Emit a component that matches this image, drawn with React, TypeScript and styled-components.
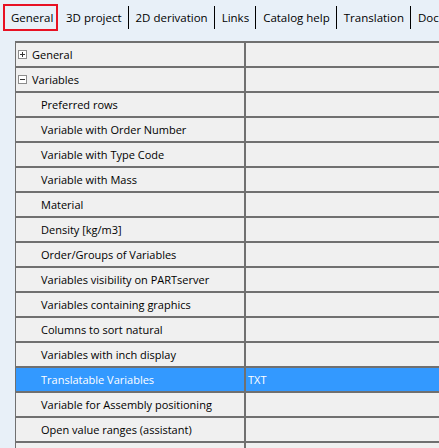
import React from 'react';
import styled, { createGlobalStyle } from 'styled-components';

const GlobalStyle = createGlobalStyle`
  body {
    margin: 0;
    background: #e8f0f8;
    font-family: "Open Sans", "Noto Sans", sans-serif;
    overflow: hidden;
  }
`;

const Page = styled.div`
  width: 439px;
  height: 448px;
  overflow: hidden;
  background: #e8f0f8;
`;

const TabBar = styled.div`
  display: flex;
  align-items: center;
  height: 34px;
  padding-left: 3px;
  white-space: nowrap;
`;

const Tab = styled.div<{ $active?: boolean }>`
  flex-shrink: 0;
  font-size: 11.5px;
  color: #000;
  height: 27px;
  box-sizing: border-box;
  display: flex;
  align-items: center;
  padding: ${p => (p.$active ? '0 0 0 6px' : '0 6px 0 7px')};
  border: ${p => (p.$active ? '2px solid #e81123' : 'none')};
  width: ${p => (p.$active ? '55px' : 'auto')};
  margin-right: ${p => (p.$active ? '1px' : '0')};
`;

const Sep = styled.div`
  flex-shrink: 0;
  width: 1px;
  height: 23px;
  background: #000;
`;

const Grid = styled.div`
  margin: 7px 0 0 15px;
  border-top: 2px solid #707070;
  border-left: 1px solid #707070;
  background: #f0f0f0;
`;

const Row = styled.div<{ $selected?: boolean }>`
  display: grid;
  grid-template-columns: 230px 1fr;
  height: 25px;
  box-sizing: border-box;
  border-bottom: 2px solid #707070;
  background: ${p => (p.$selected ? '#3399ff' : '#f0f0f0')};
  color: ${p => (p.$selected ? '#fff' : '#000')};
  font-size: 11px;
`;

const NameCell = styled.div<{ $level: number }>`
  display: flex;
  align-items: center;
  padding-left: ${p => (p.$level === 0 ? '2px' : '25px')};
  border-right: 2px solid #707070;
  gap: 4px;
`;

const ValueCell = styled.div`
  display: flex;
  align-items: center;
  padding-left: 2px;
`;

const Expander = styled.span`
  width: 9px;
  height: 9px;
  box-sizing: border-box;
  border: 1px solid #8c8c8c;
  position: relative;
  background: #fff;
  margin-right: 1px;
  &::before {
    content: '';
    position: absolute;
    left: 1px;
    right: 1px;
    top: 3px;
    height: 1px;
    background: #333;
  }
`;

const Plus = styled(Expander)`
  &::after {
    content: '';
    position: absolute;
    top: 1px;
    bottom: 1px;
    left: 3px;
    width: 1px;
    background: #333;
  }
`;

const tabs = ['General', '3D project', '2D derivation', 'Links', 'Catalog help', 'Translation', 'Documents'];

type Item = { name: string; level: number; toggle?: 'plus' | 'minus'; value?: string; selected?: boolean };

const rows: Item[] = [
  { name: 'General', level: 0, toggle: 'plus' },
  { name: 'Variables', level: 0, toggle: 'minus' },
  { name: 'Preferred rows', level: 1 },
  { name: 'Variable with Order Number', level: 1 },
  { name: 'Variable with Type Code', level: 1 },
  { name: 'Variable with Mass', level: 1 },
  { name: 'Material', level: 1 },
  { name: 'Density [kg/m3]', level: 1 },
  { name: 'Order/Groups of Variables', level: 1 },
  { name: 'Variables visibility on PARTserver', level: 1 },
  { name: 'Variables containing graphics', level: 1 },
  { name: 'Columns to sort natural', level: 1 },
  { name: 'Variables with inch display', level: 1 },
  { name: 'Translatable Variables', level: 1, value: 'TXT', selected: true },
  { name: 'Variable for Assembly positioning', level: 1 },
  { name: 'Open value ranges (assistant)', level: 1 },
  { name: '', level: 1 },
];

export default function App() {
  return (
    <Page>
      <GlobalStyle />
      <TabBar>
        {tabs.map((t, i) => (
          <React.Fragment key={t}>
            {i > 1 && <Sep />}
            <Tab $active={i === 0}>{t}</Tab>
          </React.Fragment>
        ))}
      </TabBar>
      <Grid>
        {rows.map((r, i) => (
          <Row key={i} $selected={r.selected}>
            <NameCell $level={r.level}>
              {r.toggle === 'plus' && <Plus />}
              {r.toggle === 'minus' && <Expander />}
              {r.name}
            </NameCell>
            <ValueCell>{r.value}</ValueCell>
          </Row>
        ))}
      </Grid>
    </Page>
  );
}
